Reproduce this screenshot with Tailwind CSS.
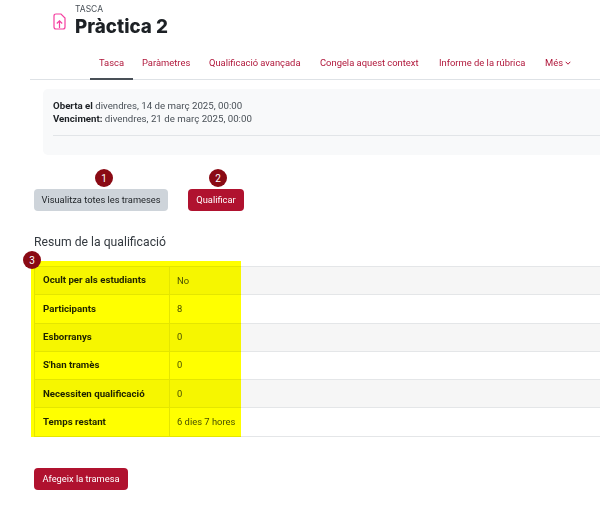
<!DOCTYPE html>
<html lang="ca">
<head>
  <meta charset="UTF-8" />
  <title>Pràctica 2</title>
  <script src="https://cdn.jsdelivr.net/npm/@tailwindcss/browser@4"></script>
</head>
<body class="bg-white w-[600px] h-[507px] overflow-hidden font-['Roboto',sans-serif] text-[#1d2125] whitespace-nowrap">
  <!-- capcalera -->
  <div class="flex items-start pl-[53px] pt-[4px] h-[44px]">
    <svg class="w-[13px] h-[17px] mt-[9px] mr-[9px]" viewBox="0 0 13 17" fill="none" stroke="#f53fa0" stroke-width="1.2">
      <path d="M3 1 H8 L12 5 V14 Q12 16 10 16 H3 Q1 16 1 14 V3 Q1 1 3 1 Z" />
      <path d="M6.5 15 V8 M3.8 10.5 L6.5 7.8 L9.2 10.5" />
    </svg>
    <div>
      <div class="text-[8.5px] leading-[11px] text-[#495057] font-['Inter',sans-serif]">TASCA</div>
      <h1 class="text-[18.8px] leading-[24px] font-extrabold font-['Inter',sans-serif]">Pràctica 2</h1>
    </div>
  </div>

  <!-- pestanyes -->
  <nav class="ml-[30px] mt-[7px] h-[29px] border-b border-[#dee2e6] pl-[60px] flex text-[9.4px] text-[#b0163a]">
    <a class="w-[43px] h-[29px] flex justify-center pt-[5px] border-b-[2px] border-[#495057]">Tasca</a>
    <a class="ml-[9px] pt-[5px] w-[48px]">Paràmetres</a>
    <a class="ml-[19px] pt-[5px] w-[92px]">Qualificació avançada</a>
    <a class="ml-[19px] pt-[5px] w-[100px]">Congela aquest context</a>
    <a class="ml-[19px] pt-[5px] w-[87px]">Informe de la rúbrica</a>
    <a class="ml-[19px] pt-[5px] flex items-start gap-[2px]">Més
      <svg class="w-[6px] h-[6px] mt-[4px]" viewBox="0 0 6 6" fill="none" stroke="#b0163a" stroke-width="1"><path d="M.7 1.8 L3 4.2 L5.3 1.8" /></svg>
    </a>
  </nav>

  <!-- dates -->
  <div class="ml-[43px] mt-[9px] h-[66px] bg-[#f8f9fa] rounded-l-[5px] pl-[10px] pt-[10px] text-[9.7px] leading-[13px] text-[#495057]">
    <div><b class="text-[#1d2125]">Oberta el</b> divendres, 14 de març 2025, 00:00</div>
    <div><b class="text-[#1d2125]">Venciment:</b> divendres, 21 de març 2025, 00:00</div>
    <div class="border-t border-[#e2e5e8] mt-[10px]"></div>
  </div>

  <!-- botons -->
  <div class="ml-[34px] mt-[34px] flex gap-[20px] text-[9.3px]">
    <button class="w-[134px] h-[22px] rounded-[4px] bg-[#ced4da] text-[#1d2125]">Visualitza totes les trameses</button>
    <button class="w-[56px] h-[22px] rounded-[4px] bg-[#b0122f] text-white">Qualificar</button>
  </div>

  <h3 class="ml-[34px] mt-[23px] text-[12.2px] leading-[16px] text-[#343a40]">Resum de la qualificació</h3>

  <!-- taula -->
  <table class="ml-[34px] mt-[16px] w-[566px] border-collapse text-[9.7px] table-fixed">
    <tbody>
      <tr class="h-[28.3px] bg-[#f6f6f6] border-y border-[#e4e6e8]"><th class="w-[135px] pl-[8px] text-left border-x border-[#e4e6e8]">Ocult per als estudiants</th><td class="pl-[7px] text-[#495057] text-[9.4px]">No</td></tr>
      <tr class="h-[28.3px] border-b border-[#e4e6e8]"><th class="pl-[8px] text-left border-x border-[#e4e6e8]">Participants</th><td class="pl-[7px] text-[#495057] text-[9.4px]">8</td></tr>
      <tr class="h-[28.3px] bg-[#f6f6f6] border-b border-[#e4e6e8]"><th class="pl-[8px] text-left border-x border-[#e4e6e8]">Esborranys</th><td class="pl-[7px] text-[#495057] text-[9.4px]">0</td></tr>
      <tr class="h-[28.3px] border-b border-[#e4e6e8]"><th class="pl-[8px] text-left border-x border-[#e4e6e8]">S'han tramès</th><td class="pl-[7px] text-[#495057] text-[9.4px]">0</td></tr>
      <tr class="h-[28.3px] bg-[#f6f6f6] border-b border-[#e4e6e8]"><th class="pl-[8px] text-left border-x border-[#e4e6e8]">Necessiten qualificació</th><td class="pl-[7px] text-[#495057] text-[9.4px]">0</td></tr>
      <tr class="h-[28.3px] border-b border-[#e4e6e8]"><th class="pl-[8px] text-left border-x border-[#e4e6e8]">Temps restant</th><td class="pl-[7px] text-[#495057] text-[9.4px]">6 dies 7 hores</td></tr>
    </tbody>
  </table>

  <button class="ml-[34px] mt-[31px] w-[94px] h-[22px] rounded-[4px] bg-[#b0122f] text-white text-[9.3px]">Afegeix la tramesa</button>

  <!-- requadre groc i numeros sobre la captura -->
  <div class="absolute left-[31px] top-[261px] w-[210px] h-[176px] bg-[#ffff00] mix-blend-multiply"></div>
  <div class="absolute left-[95px] top-[169px] w-[18px] h-[18px] rounded-full bg-[#8a0a14] text-white text-[10px] flex items-center justify-center">1</div>
  <div class="absolute left-[209px] top-[169px] w-[18px] h-[18px] rounded-full bg-[#8a0a14] text-white text-[10px] flex items-center justify-center">2</div>
  <div class="absolute left-[23px] top-[251px] w-[18px] h-[18px] rounded-full bg-[#8a0a14] text-white text-[10px] flex items-center justify-center">3</div>
</body>
</html>
